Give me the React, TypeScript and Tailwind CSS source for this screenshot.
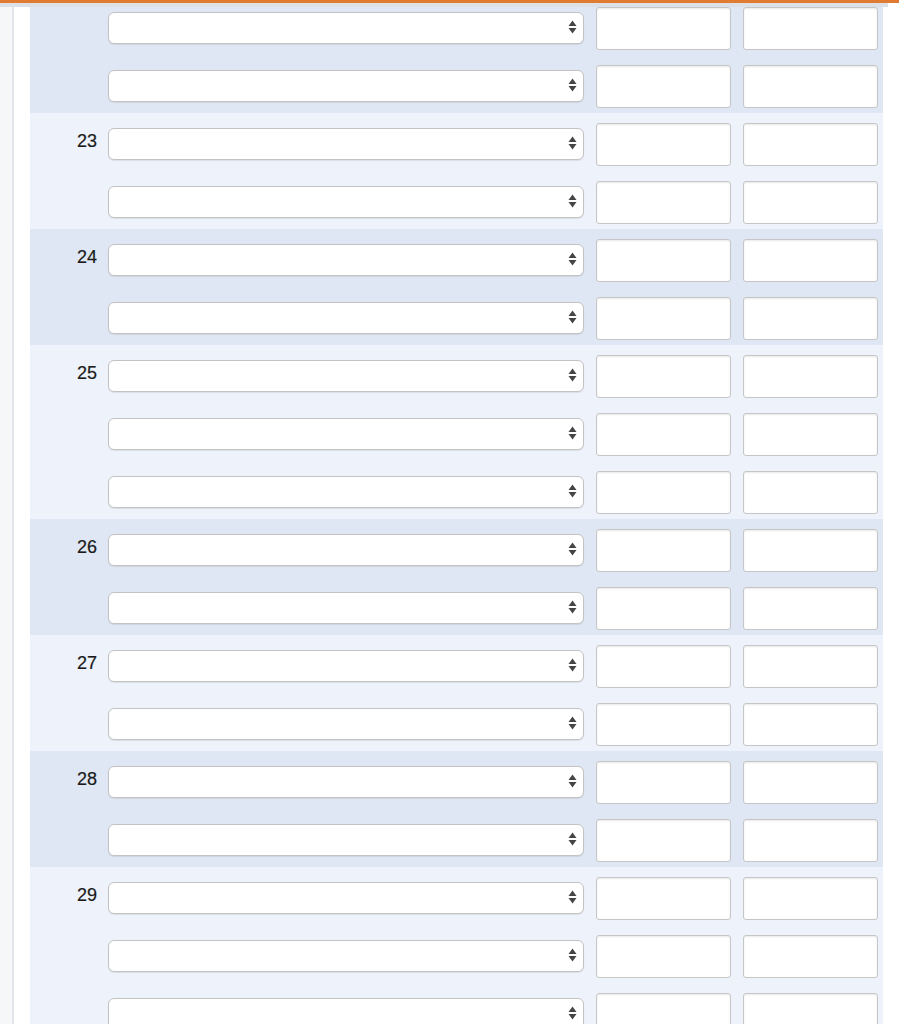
import React from "react";

type Group = { n: string; rows: number; dark: boolean };

const groups: Group[] = [
  { n: "", rows: 2, dark: true },
  { n: "23", rows: 2, dark: false },
  { n: "24", rows: 2, dark: true },
  { n: "25", rows: 3, dark: false },
  { n: "26", rows: 2, dark: true },
  { n: "27", rows: 2, dark: false },
  { n: "28", rows: 2, dark: true },
  { n: "29", rows: 3, dark: false },
];

function Arrows() {
  return (
    <svg width="9" height="14" viewBox="0 0 9 14" className="pointer-events-none absolute right-[7px] top-[8px]">
      <polygon points="0.5,6 4.5,0.5 8.5,6" fill="#454545" />
      <polygon points="0.5,8 4.5,13.5 8.5,8" fill="#454545" />
    </svg>
  );
}

function Row({ label }: { label: string }) {
  return (
    <div className="flex h-[58px] items-start">
      <div
        className="mt-[16px] w-[68px] pr-[1px] text-right text-[18px] leading-[24px] text-[#1a1a1a]"
        style={{ fontFamily: '"Liberation Sans", Arial, sans-serif', WebkitTextStroke: "0.2px #1a1a1a" }}
      >
        {label}
      </div>
      <div className="relative ml-[10px] mt-[15px] h-[32px] w-[476px]">
        <select
          className="h-[32px] w-[476px] appearance-none rounded-[6px] border border-[#c3c3c3] bg-white shadow-[0_1px_1px_rgba(0,0,0,0.08)] outline-none"
          defaultValue=""
        >
          <option value=""></option>
        </select>
        <Arrows />
      </div>
      <input
        type="text"
        className="ml-[12px] mt-[10px] h-[43px] w-[135px] rounded-[3px] border border-[#c6c6c6] bg-white shadow-[inset_0_1px_2px_rgba(0,0,0,0.09)] outline-none"
      />
      <input
        type="text"
        className="ml-[12px] mt-[10px] h-[43px] w-[135px] rounded-[3px] border border-[#c6c6c6] bg-white shadow-[inset_0_1px_2px_rgba(0,0,0,0.09)] outline-none"
      />
    </div>
  );
}

export default function App() {
  return (
    <div
      className="h-[1024px] w-[899px] overflow-hidden bg-white"
      style={{ fontFamily: '"Liberation Sans", Arial, sans-serif' }}
    >
      <div className="h-[3px] w-full bg-[#e27b32]" />
      <div className="h-[4px] w-[888px] bg-[#dce1e8]" />
      <div className="flex h-[1017px]">
        <div className="w-[12px] bg-[#f6f7f9]" />
        <div className="w-[2px] bg-[#e2e5e9]" />
        <div className="w-[16px] bg-white" />
        <div className="w-[853px] overflow-hidden">
          <div className="-mt-[10px]">
            {groups.map((g, gi) => (
              <div key={gi} className={g.dark ? "bg-[#dfe7f4]" : "bg-[#edf2fb]"}>
                {Array.from({ length: g.rows }).map((_, ri) => (
                  <Row key={ri} label={ri === 0 ? g.n : ""} />
                ))}
              </div>
            ))}
          </div>
        </div>
      </div>
    </div>
  );
}
